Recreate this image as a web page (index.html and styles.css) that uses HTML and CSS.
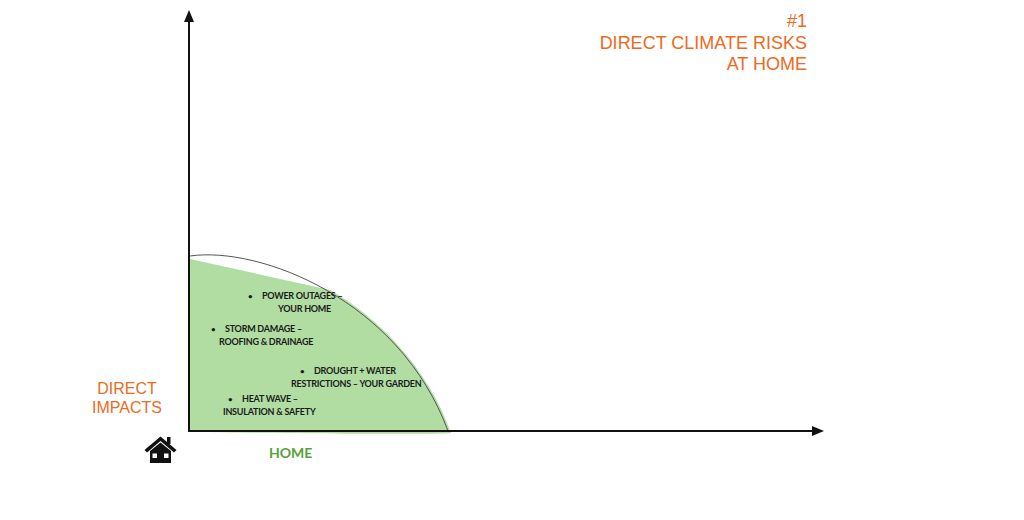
FILE: index.html
```html
<!DOCTYPE html>
<html>
<head>
<meta charset="utf-8">
<link rel="stylesheet" href="styles.css">
</head>
<body>
<div class="canvas">
  <svg class="chart" width="1024" height="520" viewBox="0 0 1024 520">
    <path class="fill" d="M190,259 L330,290 C 379,318 428,368 451,433 C 430,435 300,433 190,432 Z"/>
    <path class="outline" d="M190,256 C 260,246 400,300 448,431"/>
    <line class="axis" x1="189" y1="20" x2="189" y2="432"/>
    <polygon class="arrow" points="189,10 184,22 194,22"/>
    <line class="axis" x1="188" y1="431" x2="813" y2="431"/>
    <polygon class="arrow" points="824,431 812,426 812,436"/>
    <g class="house">
      <path d="M144.5,450 L160.5,436.5 L176.5,450 L174,452.5 L160.5,441 L147,452.5 Z"/>
      <rect x="167" y="437" width="3.5" height="7"/>
      <path d="M150,451 L160.5,442.5 L171,451 L171,463 L150,463 Z"/>
    </g>
    <g class="win">
      <rect x="152.5" y="453.5" width="4.5" height="4.5"/>
      <rect x="164" y="453.5" width="4.5" height="4.5"/>
    </g>
  </svg>

  <div class="title">
    <div>#1</div>
    <div>DIRECT CLIMATE RISKS</div>
    <div>AT HOME</div>
  </div>

  <div class="ylabel">DIRECT<br>IMPACTS</div>
  <div class="xlabel">HOME</div>

  <div class="item i1"><span class="b">•</span>POWER OUTAGES –<br><span class="l2">YOUR HOME</span></div>
  <div class="item i2"><span class="b">•</span>STORM DAMAGE –<br><span class="l2">ROOFING &amp; DRAINAGE</span></div>
  <div class="item i3"><span class="b">•</span>DROUGHT + WATER<br><span class="l2">RESTRICTIONS – YOUR GARDEN</span></div>
  <div class="item i4"><span class="b">•</span>HEAT WAVE –<br><span class="l2">INSULATION &amp; SAFETY</span></div>
</div>
</body>
</html>
```

FILE: styles.css
```css
html, body {
  margin: 0;
  padding: 0;
  background: #ffffff;
}
.canvas {
  position: relative;
  width: 1024px;
  height: 520px;
  overflow: hidden;
  font-family: "Liberation Sans", Arial, sans-serif;
}
.chart {
  position: absolute;
  left: 0;
  top: 0;
}
.fill { fill: #b1dda2; stroke: none; }
.outline { fill: none; stroke: #555; stroke-width: 1; }
.axis { stroke: #111; stroke-width: 2; }
.arrow { fill: #111; }
.house path, .house rect { fill: #111; }
.win rect { fill: #fff; }

.title {
  position: absolute;
  right: 217px;
  top: 11px;
  text-align: right;
  color: #ee6a1c;
  font-size: 18px;
  line-height: 21.5px;
}
.ylabel {
  position: absolute;
  left: 83px;
  width: 88px;
  top: 379px;
  text-align: center;
  color: #ee6a1c;
  font-size: 16px;
  line-height: 19px;
}
.xlabel {
  position: absolute;
  left: 269px;
  top: 444px;
  color: #5aa03a;
  font-family: Lato, "Open Sans", sans-serif;
  font-weight: 700;
  font-size: 14px;
  line-height: 18px;
}
.item {
  position: absolute;
  font-family: Lato, "Open Sans", sans-serif;
  font-weight: 700;
  font-size: 9px;
  letter-spacing: -0.25px;
  line-height: 12.5px;
  color: #1a1a1a;
  white-space: nowrap;
  text-align: left;
}
.item .b {
  display: inline-block;
  width: 14px;
  font-size: 8px;
}
.i1 { left: 248px; top: 290px; }
.i2 { left: 211px; top: 323px; }
.i3 { left: 290px; top: 365px; }
.i4 { left: 222px; top: 393px; }
.i1 .l2 { padding-left: 30px; }
.i2 .l2 { padding-left: 8px; }
.i3 .l2 { padding-left: 1px; }
.i4 .l2 { padding-left: 1px; }
.i3 .b { margin-left: 10px; }
.i4 .b { margin-left: 6px; }
```
